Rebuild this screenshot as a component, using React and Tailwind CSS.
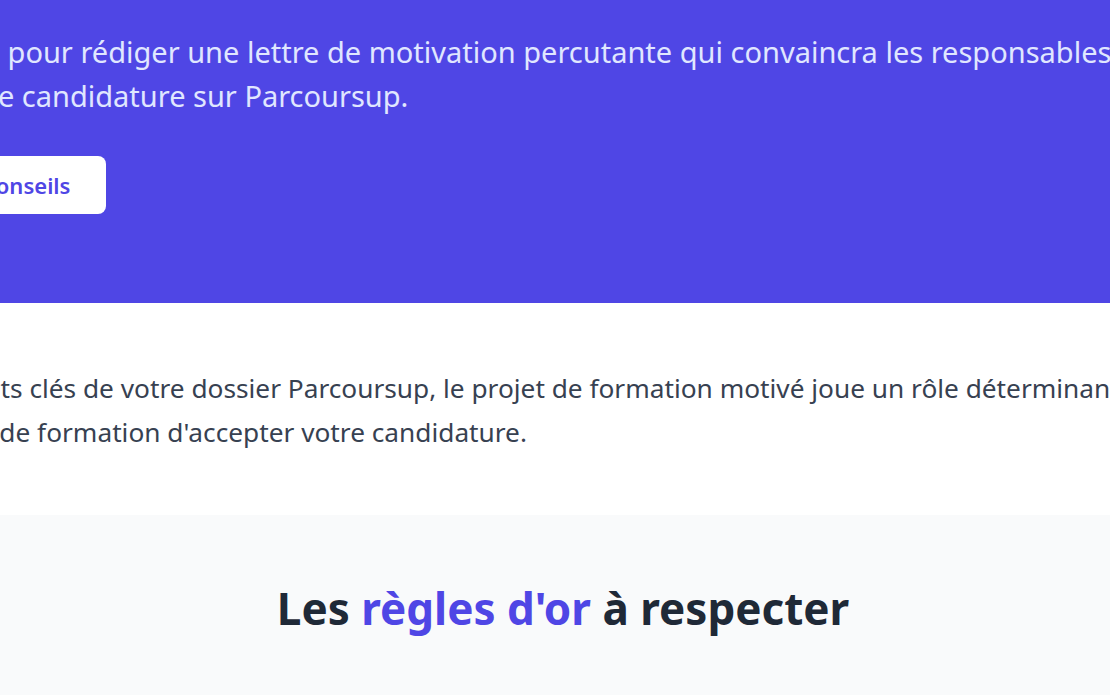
export default function App() {
  return (
    <div className="min-h-screen bg-gray-50" style={{ fontFamily: '"Noto Sans", sans-serif' }}>
      {/* Hero */}
      <section className="overflow-hidden bg-[#4f46e5]">
        <div className="flex justify-center">
          <div className="w-[1920px] shrink-0 px-[22px] pt-[30px] pb-[89px]">
            <p className="whitespace-nowrap text-[29px] leading-[44px] text-[#e0e7ff]">
              Découvrez tous nos conseils pour rédiger une lettre de motivation percutante qui convaincra les responsables
              <br />
              de formation de retenir votre candidature sur Parcoursup.
            </p>
            <div className="mt-[38px] flex gap-3">
              <a href="#" className="flex h-[58px] items-center rounded-lg border-2 border-indigo-300 px-[30px] text-[22px] font-semibold text-white">
                Exemples
              </a>
              <a href="#" className="-ml-px flex h-[58px] items-center rounded-lg bg-white px-[36px] text-[22px] font-semibold text-[#4f46e5]">
                Découvrir nos conseils
              </a>
            </div>
          </div>
        </div>
      </section>

      {/* Intro */}
      <section className="overflow-hidden bg-white">
        <div className="flex justify-center">
          <div className="w-[1534px] shrink-0 pt-[63px] pb-[61px]">
            <p className="whitespace-nowrap text-[26.25px] leading-[44px] text-[#374151]">
              Parmi les éléments clés de votre dossier Parcoursup, le projet de formation motivé joue un rôle déterminant pour convaincre
              <br />
              les responsables de formation d'accepter votre candidature.
            </p>
          </div>
        </div>
      </section>

      {/* Règles */}
      <section className="bg-[#f9fafb] pt-[67px] pb-[60px] pl-4">
        <h2 className="text-center text-[44px] font-bold leading-[52px] text-[#1f2937]">
          Les <span className="text-[#4f46e5]">règles d'or</span> à respecter
        </h2>
      </section>
    </div>
  )
}
